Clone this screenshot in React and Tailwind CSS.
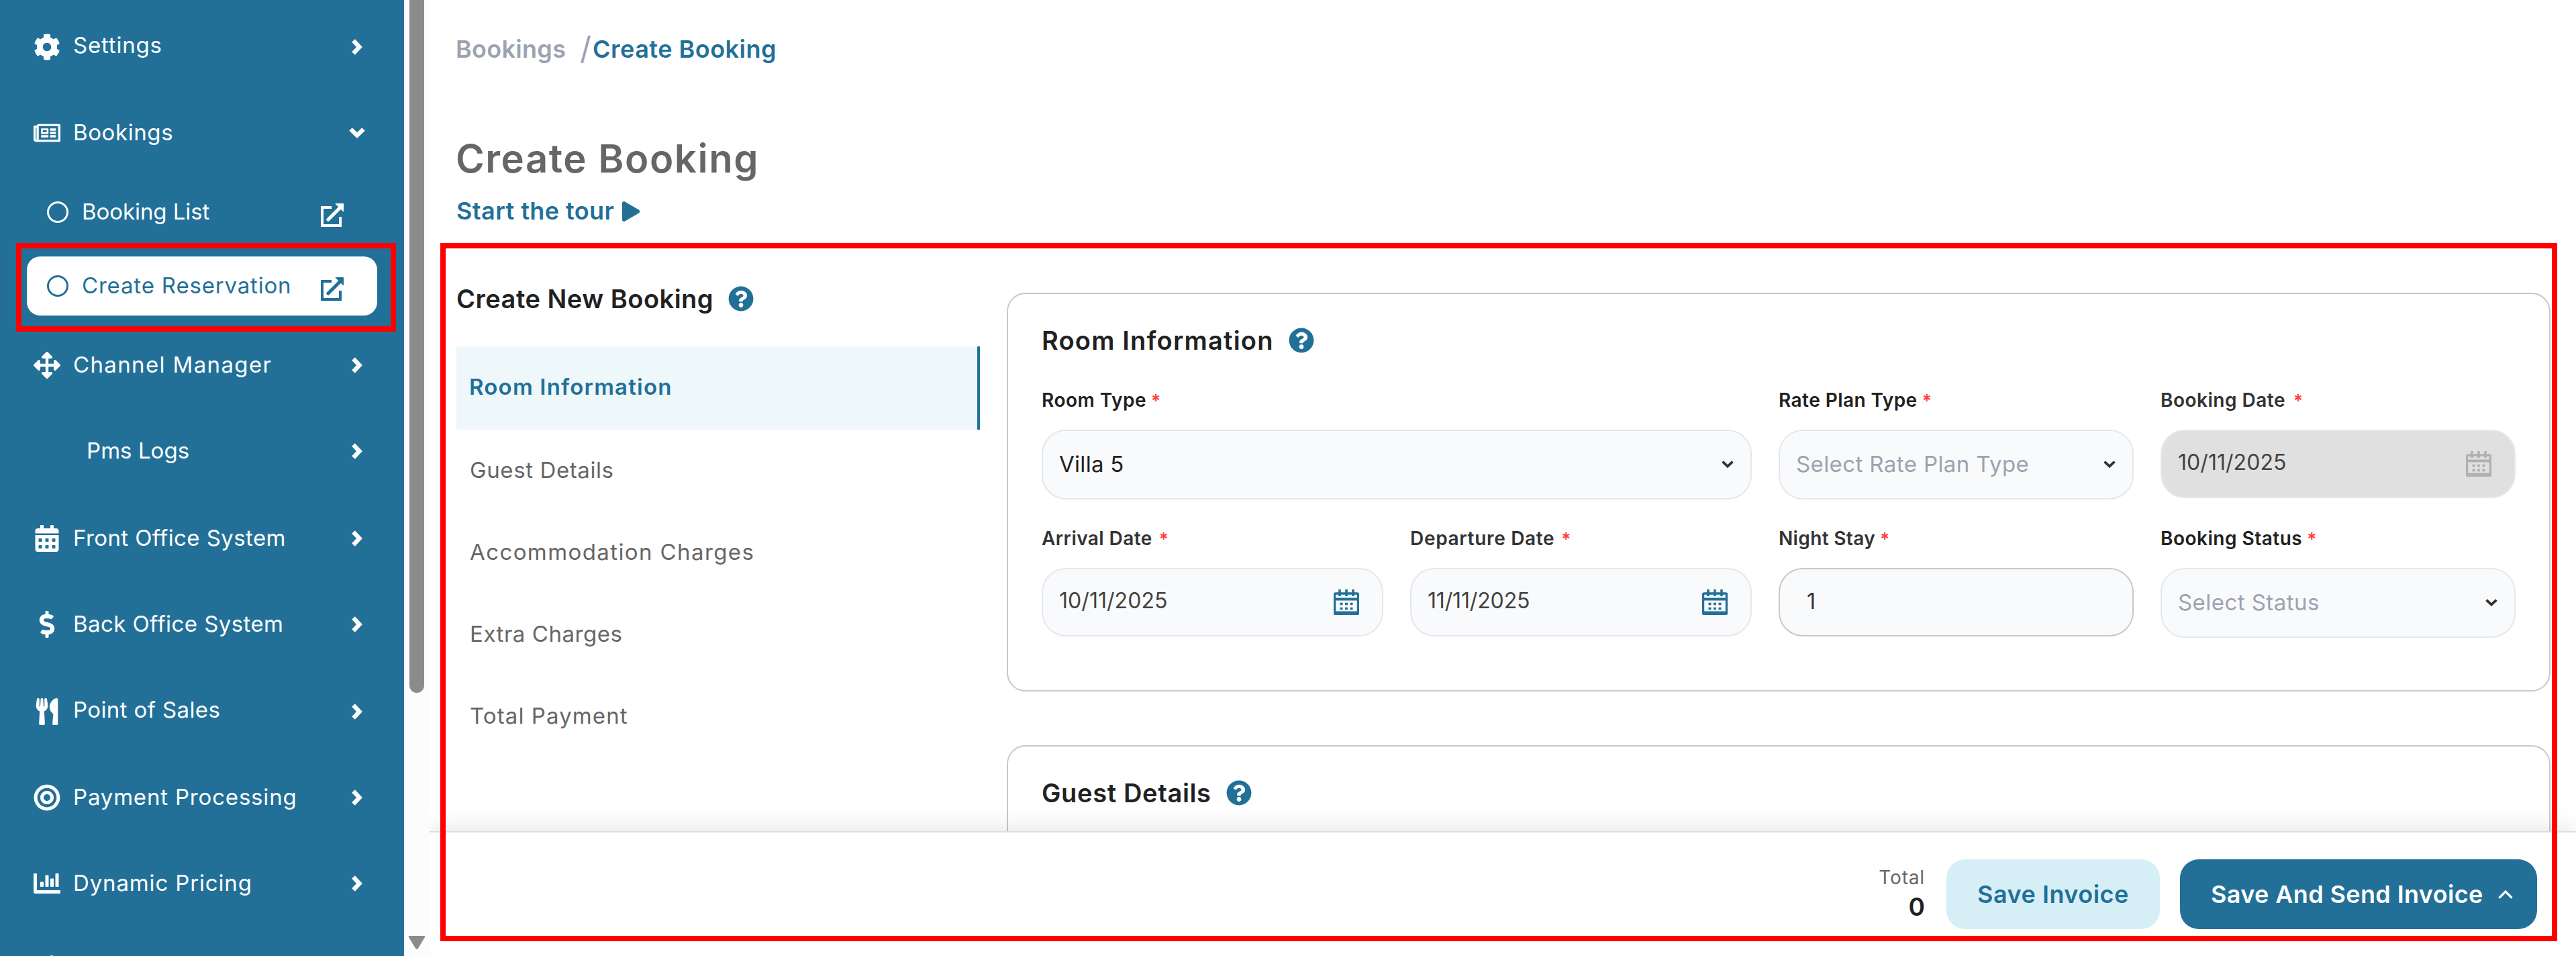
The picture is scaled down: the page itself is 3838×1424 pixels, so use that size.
import React from "react";
import {
  FaCog,
  FaRegNewspaper,
  FaArrowsAlt,
  FaCalendarAlt,
  FaDollarSign,
  FaUtensils,
  FaBullseye,
  FaChartBar,
  FaQuestionCircle,
  FaPlay,
} from "react-icons/fa";

function ExternalIcon() {
  return (
    <svg viewBox="0 0 34 36" className="h-9 w-[34px]" fill="none" stroke="currentColor">
      <path d="M16 6H2v27h27V20" strokeWidth="4" />
      <path d="M11 24 29 6" strokeWidth="5.2" strokeLinecap="round" />
      <path d="M22 .5h11.5V12z" fill="currentColor" strokeWidth="1" />
    </svg>
  );
}

function SideChevron({ open }) {
  return (
    <svg
      viewBox="0 0 24 24"
      className={`h-6 w-6 ${open ? "rotate-90" : ""}`}
      fill="none"
      stroke="currentColor"
      strokeWidth="6.4"
    >
      <path d="M6.500 2.500 15.500 12 6.500 21.500" />
    </svg>
  );
}

function CalendarIcon({ className }) {
  return (
    <svg viewBox="0 0 38 38" className={`h-[38px] w-[38px] ${className}`} fill="none" stroke="currentColor">
      <path d="M3 6h32a1.500 1.500 0 0 1 1.500 1.500v27.500a1.500 1.500 0 0 1-1.500 1.500H3A1.500 1.500 0 0 1 1.500 35V7.500A1.500 1.500 0 0 1 3 6z" strokeWidth="3.400" />
      <path d="M1 14.500h36M1 34.500h36" strokeWidth="4" />
      <path d="M9 0v10M19 0v10M29 0v10" strokeWidth="3.600" />
      <path d="M9.500 21.500h4M17 21.500h4M24.500 21.500h4M9.500 28.500h4M17 28.500h4M24.500 28.500h4" strokeWidth="3.600" />
    </svg>
  );
}

function Caret() {
  return (
    <svg viewBox="0 0 18 12" className="h-3 w-[18px] text-[#333]" fill="none" stroke="currentColor" strokeWidth="3.800">
      <path d="M1.500 1.700 9 8.700 16.500 1.700" />
    </svg>
  );
}

const topItems = [
  { label: "Settings", Icon: FaCog, text: "tracking-[0.8px] pb-1.5", row: "" },
  { label: "Bookings", Icon: FaRegNewspaper, text: "tracking-[0.6px] pb-0.5", row: "", open: true },
];

const lowerItems = [
  { label: "Channel Manager", Icon: FaArrowsAlt, text: "tracking-[1.36px] pb-0.5", row: "mt-2.5" },
  { label: "Pms Logs", Icon: null, text: "tracking-[0.05px] pb-0.5 pl-5", row: "" },
  { label: "Front Office System", Icon: FaCalendarAlt, text: "tracking-[0.4px] pb-0.5", row: "mt-0.5" },
  { label: "Back Office System", Icon: FaDollarSign, text: "tracking-[0.42px] pb-0.5", row: "" },
  { label: "Point of Sales", Icon: FaUtensils, text: "tracking-[0.38px] pb-1.5", row: "mt-0.5" },
  { label: "Payment Processing", Icon: FaBullseye, text: "tracking-[0.82px] pb-0.5", row: "" },
  { label: "Dynamic Pricing", Icon: FaChartBar, text: "tracking-[0.85px] pb-0.5", row: "" },
];

function SideItem({ label, Icon, text, row, open }) {
  return (
    <div className={`flex h-32 shrink-0 items-center pr-[54px] pl-[50px] ${row}`}>
      <div className="flex w-10 justify-center">{Icon ? <Icon size={40} /> : null}</div>
      <span className={`ml-[19px] flex-1 whitespace-nowrap ${text}`}>{label}</span>
      <span className="flex w-8 justify-center">
        <SideChevron open={open} />
      </span>
    </div>
  );
}

function SubItem({ label, text, active, row }) {
  return (
    <div
      className={`mx-10 flex h-[88px] shrink-0 items-center rounded-[20px] pr-[50px] pl-[30px] ${
        active ? "bg-white text-[#227098]" : ""
      } ${row}`}
    >
      <span className="h-8 w-8 rounded-full border-[3px] border-current" />
      <span className={`ml-5 flex-1 pb-0.5 whitespace-nowrap ${text}`}>{label}</span>
      <span className="pt-2.5">
        <ExternalIcon />
      </span>
    </div>
  );
}

function Sidebar() {
  return (
    <aside className="flex h-full w-[602px] shrink-0 flex-col overflow-hidden bg-[#227098] pt-1.5 text-[33px] leading-[48px] text-white">
      {topItems.map((i) => (
        <SideItem key={i.label} {...i} />
      ))}
      <SubItem label="Booking List" text="tracking-[-0.07px]" row="mt-2.5" />
      <SubItem label="Create Reservation" text="tracking-[0.82px]" row="mt-[22px]" active />
      {lowerItems.map((i) => (
        <SideItem key={i.label} {...i} />
      ))}
      <div className="mt-[43px] ml-[74px] h-10 w-1.5 shrink-0 rounded-full bg-white/80" />
    </aside>
  );
}

function ScrollBar() {
  return (
    <div className="relative z-10 flex h-full w-[38px] shrink-0 flex-col justify-between bg-[#fcfcfc] pb-2.5 pl-2">
      <div className="h-[1032px] w-[22px] rounded-b-full bg-[#8b8b8b]" />
      <svg viewBox="0 0 26 20" className="-ml-0.5 h-5 w-[26px] text-[#8b8b8b]" fill="currentColor">
        <path d="M2 0h22q2 0 1 2L15 18.500q-2 2.500-4 0L1 2Q0 0 2 0z" />
      </svg>
    </div>
  );
}

const steps = [
  { label: "Guest Details", text: "tracking-[0.6px]" },
  { label: "Accommodation Charges", text: "tracking-[1.4px]" },
  { label: "Extra Charges", text: "tracking-[0.54px]" },
  { label: "Total Payment", text: "tracking-[1.1px]" },
];

function SectionTitle({ children, text }) {
  return (
    <div className="flex h-14 items-center text-[38px] font-semibold text-[#212121]">
      <h2 className={`whitespace-nowrap ${text}`}>{children}</h2>
      <FaQuestionCircle size={38} className="ml-[22px] text-[#227098]" />
    </div>
  );
}

function Field({ label, labelText, star = "ml-[7px]", children }) {
  return (
    <div className="h-[206px]">
      <div className="mb-6 flex h-10 items-center text-[28px] font-semibold whitespace-nowrap">
        <span className={labelText}>{label}</span>
        <span className={`text-[26px] text-[#ff3b3b] ${star}`}>*</span>
      </div>
      {children}
    </div>
  );
}

function SelectBox({ value, text }) {
  return (
    <div className="flex h-[104px] items-center justify-between rounded-[36px] border-2 border-[#e5e7eb] bg-[#f9fafb] pr-[25px] pl-6 text-[33px]">
      <span className={`whitespace-nowrap ${text}`}>{value}</span>
      <Caret />
    </div>
  );
}

function DateBox({ value, text, box, icon }) {
  return (
    <div className={`flex h-[102px] items-center justify-between rounded-[36px] border-2 border-[#e5e7eb] pr-[34px] pl-6 text-[32px] text-[#424242] ${box}`}>
      <span className={`pb-1 whitespace-nowrap ${text}`}>{value}</span>
      <CalendarIcon className={icon} />
    </div>
  );
}

function RoomCard() {
  return (
    <section className="h-[594px] rounded-[28px] border-2 border-[#c8c8c8] px-[50px] pt-[41px]">
      <SectionTitle text="tracking-[1.2px]">Room Information</SectionTitle>
      <div className="mt-[41px] grid grid-cols-[509px_509px_529px_529px] gap-x-10">
        <div className="col-span-2">
          <Field label="Room Type" labelText="tracking-[0.5px] text-[#212121]">
            <SelectBox value="Villa 5" text="tracking-[0.3px] text-[#212121]" />
          </Field>
        </div>
        <Field label="Rate Plan Type" labelText="tracking-[0.45px] text-[#212121]">
          <SelectBox value="Select Rate Plan Type" text="tracking-[0.4px] text-[#9ca3af]" />
        </Field>
        <Field label="Booking Date" labelText="tracking-[0.5px] text-[#333]" star="ml-3">
          <DateBox value="10/11/2025" text="tracking-[0.05px]" box="bg-[#e0e0e0]" icon="text-[#b0b0b0]" />
        </Field>
        <Field label="Arrival Date" labelText="tracking-[0.42px] text-[#333]" star="ml-2.5">
          <DateBox value="10/11/2025" text="tracking-[0.05px]" box="bg-[#f9fafb]" icon="text-[#227098]" />
        </Field>
        <Field label="Departure Date" labelText="tracking-[0.68px] text-[#333]" star="ml-2.5">
          <DateBox value="11/11/2025" text="tracking-[-0.15px]" box="bg-[#f9fafb]" icon="text-[#227098]" />
        </Field>
        <Field label="Night Stay" labelText="tracking-[0.35px] text-[#333]">
          <div className="flex h-[102px] items-center rounded-[36px] border-2 border-[#c8c8c8] bg-[#f9fafb] pb-0.5 pl-10 text-[32px] text-[#333]">
            1
          </div>
        </Field>
        <Field label="Booking Status" labelText="tracking-[0.5px] text-[#212121]">
          <SelectBox value="Select Status" text="tracking-[0.45px] text-[#9ca3af]" />
        </Field>
      </div>
    </section>
  );
}

function Footer() {
  return (
    <footer className="relative flex h-[186px] shrink-0 items-start justify-end border-t-2 border-[#dedede] bg-white pt-10 pr-[58px] shadow-[0_0_36px_rgba(0,0,0,0.13)]">
      <div className="mr-8 flex flex-col items-end pt-1.5">
        <span className="text-[28px] leading-[42px] tracking-[0.83px] text-[#666]">Total</span>
        <span className="text-[37px] leading-[46px] font-semibold text-[#212121]">0</span>
      </div>
      <button className="flex h-[104px] w-[318px] items-center justify-center rounded-[28px] bg-[#d6eff6] text-[36px] font-semibold tracking-[0.5px] whitespace-nowrap text-[#227098]">
        Save Invoice
      </button>
      <button className="ml-[30px] flex h-[104px] w-[532px] items-center rounded-[28px] bg-[#227098] pl-[46px] text-[36px] font-semibold tracking-[0.38px] whitespace-nowrap text-white">
        Save And Send Invoice
        <svg viewBox="0 0 22 14" className="ml-[22px] h-3.5 w-[22px]" fill="none" stroke="currentColor" strokeWidth="3.200">
          <path d="M1.500 12.500 11 3l9.500 9.500" />
        </svg>
      </button>
    </footer>
  );
}

export default function App() {
  return (
    <div className="relative flex h-[1424px] w-[3838px] overflow-hidden bg-white font-['Inter',sans-serif]">
      <Sidebar />
      <ScrollBar />
      <main className="flex min-w-0 flex-1 flex-col">
        <div className="h-[1238px] overflow-hidden pt-[46px] pr-[38px] pl-10">
          <nav className="flex h-[54px] items-center text-[36px] whitespace-nowrap">
            <span className="-ml-px w-[185px] font-semibold tracking-[0.3px] text-[#9ca3af]">Bookings</span>
            <span className="w-[19px] pb-0.5 text-[47px] text-[#9ca3af]">/</span>
            <span className="font-semibold tracking-[0.5px] text-[#227098]">Create Booking</span>
          </nav>
          <h1 className="mt-[101px] -ml-px h-[69px] text-[58px] leading-[70px] font-semibold tracking-[1.55px] text-[#666]">
            Create Booking
          </h1>
          <div className="mt-[18px] flex h-[54px] items-center text-[36px] font-semibold text-[#227098]">
            <span className="pb-0.5 tracking-[0.41px]">Start the tour</span>
            <FaPlay size={30} className="ml-2.5" />
          </div>
          <div className="mt-[74px] flex gap-10">
            <div className="w-[780px] shrink-0 pt-px">
              <SectionTitle text="tracking-[0.5px]">Create New Booking</SectionTitle>
              <ul className="mt-[43px] text-[33px] text-[#666]">
                <li className="flex h-[124px] items-center border-r-4 border-[#227098] bg-[#eef8fb] pb-0.5 pl-[19px] font-semibold tracking-[1.2px] text-[#227098]">
                  Room Information
                </li>
                {steps.map((s) => (
                  <li key={s.label} className={`flex h-[122px] items-center pl-5 ${s.text}`}>
                    {s.label}
                  </li>
                ))}
              </ul>
            </div>
            <div className="w-[2300px] shrink-0 pt-5">
              <RoomCard />
              <section className="mt-20 h-[594px] rounded-[28px] border-2 border-[#c8c8c8] px-[50px] pt-[41px]">
                <SectionTitle text="tracking-[0.65px]">Guest Details</SectionTitle>
              </section>
            </div>
          </div>
        </div>
        <Footer />
      </main>
      <div className="pointer-events-none absolute top-[362px] left-6 z-20 h-[132px] w-[566px] border-8 border-[#ff0000]" />
      <div className="pointer-events-none absolute top-[362px] left-[656px] z-20 h-[1040px] w-[3154px] border-8 border-[#ff0000]" />
    </div>
  );
}
